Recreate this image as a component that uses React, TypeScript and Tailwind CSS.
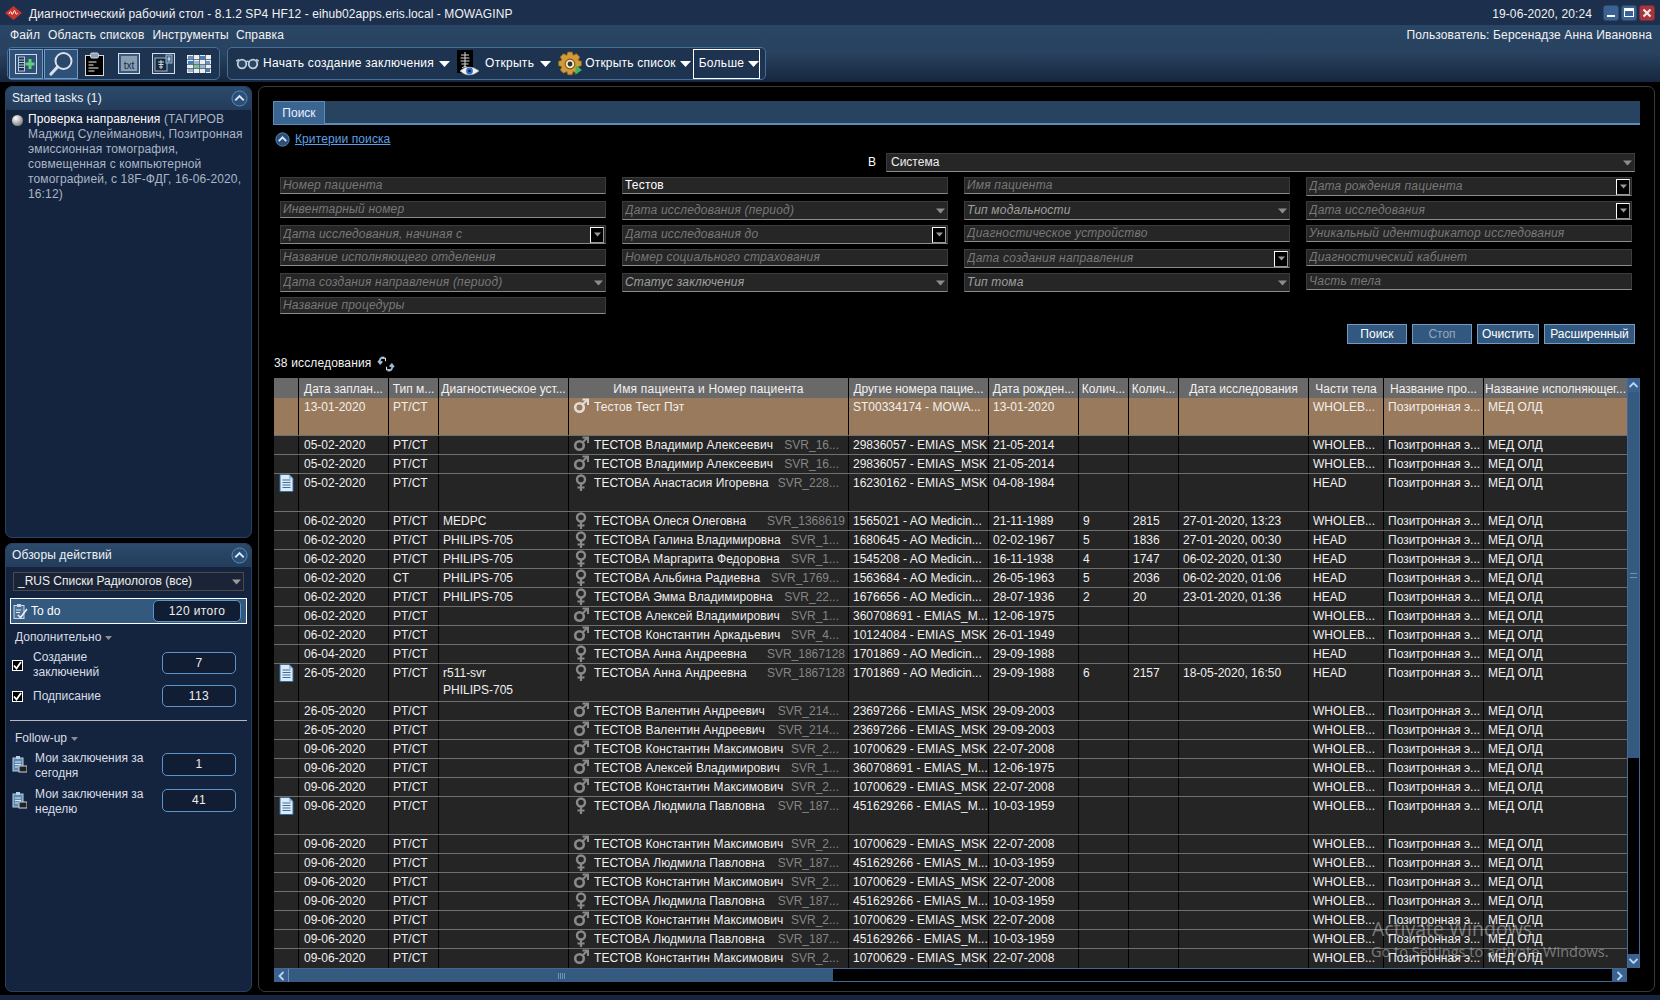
import React from "react";

type Row = {
  d: string; m: string; dev?: string; g: "m" | "f"; n: string; id?: string; o: string; b: string;
  c1?: string; c2?: string; s?: string; p: string; doc?: boolean; tall?: boolean; sel?: boolean;
};

const K: Omit<Row, "d" | "m"> = { g: "m", n: "ТЕСТОВ Константин Максимович", id: "SVR_2...", o: "10700629 - EMIAS_MSK", b: "22-07-2008", p: "WHOLEB..." };
const L: Omit<Row, "d" | "m"> = { g: "f", n: "ТЕСТОВА Людмила Павловна", id: "SVR_187...", o: "451629266 - EMIAS_M...", b: "10-03-1959", p: "WHOLEB..." };
const A: Omit<Row, "d" | "m"> = { g: "m", n: "ТЕСТОВ Алексей Владимирович", id: "SVR_1...", o: "360708691 - EMIAS_M...", b: "12-06-1975", p: "WHOLEB..." };
const V: Omit<Row, "d" | "m"> = { g: "m", n: "ТЕСТОВ Владимир Алексеевич", id: "SVR_16...", o: "29836057 - EMIAS_MSK", b: "21-05-2014", p: "WHOLEB..." };
const T: Omit<Row, "d" | "m"> = { g: "m", n: "ТЕСТОВ Валентин Андреевич", id: "SVR_214...", o: "23697266 - EMIAS_MSK", b: "29-09-2003", p: "WHOLEB..." };
const J = "09-06-2020";
const P = "PT/CT";

const rows: Row[] = [
  { d: "13-01-2020", m: P, g: "m", n: "Тестов Тест Пэт", o: "ST00334174 - MOWA...", b: "13-01-2020", p: "WHOLEB...", tall: true, sel: true },
  { d: "05-02-2020", m: P, ...V },
  { d: "05-02-2020", m: P, ...V },
  { d: "05-02-2020", m: P, g: "f", n: "ТЕСТОВА Анастасия Игоревна", id: "SVR_228...", o: "16230162 - EMIAS_MSK", b: "04-08-1984", p: "HEAD", doc: true, tall: true },
  { d: "06-02-2020", m: P, dev: "MEDPC", g: "f", n: "ТЕСТОВА Олеся Олеговна", id: "SVR_1368619", o: "1565021 - AO Medicin...", b: "21-11-1989", c1: "9", c2: "2815", s: "27-01-2020, 13:23", p: "WHOLEB..." },
  { d: "06-02-2020", m: P, dev: "PHILIPS-705", g: "f", n: "ТЕСТОВА Галина Владимировна", id: "SVR_1...", o: "1680645 - AO Medicin...", b: "02-02-1967", c1: "5", c2: "1836", s: "27-01-2020, 00:30", p: "HEAD" },
  { d: "06-02-2020", m: P, dev: "PHILIPS-705", g: "f", n: "ТЕСТОВА Маргарита Федоровна", id: "SVR_1...", o: "1545208 - AO Medicin...", b: "16-11-1938", c1: "4", c2: "1747", s: "06-02-2020, 01:30", p: "HEAD" },
  { d: "06-02-2020", m: "CT", dev: "PHILIPS-705", g: "f", n: "ТЕСТОВА Альбина Радиевна", id: "SVR_1769...", o: "1563684 - AO Medicin...", b: "26-05-1963", c1: "5", c2: "2036", s: "06-02-2020, 01:06", p: "HEAD" },
  { d: "06-02-2020", m: P, dev: "PHILIPS-705", g: "f", n: "ТЕСТОВА Эмма Владимировна", id: "SVR_22...", o: "1676656 - AO Medicin...", b: "28-07-1936", c1: "2", c2: "20", s: "23-01-2020, 01:36", p: "HEAD" },
  { d: "06-02-2020", m: P, ...A },
  { d: "06-02-2020", m: P, g: "m", n: "ТЕСТОВ Константин Аркадьевич", id: "SVR_4...", o: "10124084 - EMIAS_MSK", b: "26-01-1949", p: "WHOLEB..." },
  { d: "06-04-2020", m: P, g: "f", n: "ТЕСТОВА Анна Андреевна", id: "SVR_1867128", o: "1701869 - AO Medicin...", b: "29-09-1988", p: "HEAD" },
  { d: "26-05-2020", m: P, dev: "r511-svr\nPHILIPS-705", g: "f", n: "ТЕСТОВА Анна Андреевна", id: "SVR_1867128", o: "1701869 - AO Medicin...", b: "29-09-1988", c1: "6", c2: "2157", s: "18-05-2020, 16:50", p: "HEAD", doc: true, tall: true },
  { d: "26-05-2020", m: P, ...T },
  { d: "26-05-2020", m: P, ...T },
  { d: J, m: P, ...K },
  { d: J, m: P, ...A },
  { d: J, m: P, ...K },
  { d: J, m: P, ...L, doc: true, tall: true },
  { d: J, m: P, ...K },
  { d: J, m: P, ...L },
  { d: J, m: P, ...K },
  { d: J, m: P, ...L },
  { d: J, m: P, ...K },
  { d: J, m: P, ...L },
  { d: J, m: P, ...K },
];

const COLS = "grid grid-cols-[25px_90px_50px_130px_280px_140px_90px_50px_50px_130px_75px_100px_143px]";

const Caret = ({ c = "#fff", w = 11, h = 6 }: { c?: string; w?: number; h?: number }) => (
  <svg width={w} height={h} viewBox="0 0 11 6" className="shrink-0"><path d="M0 0h11L5.500 6z" fill={c} /></svg>
);

const Male = ({ c = "#8a8a8a" }: { c?: string }) => (
  <svg width="16" height="16" viewBox="0 0 16 16" className="shrink-0" fill="none" stroke={c}>
    <circle cx="6.500" cy="9.500" r="4.300" strokeWidth="2.600" />
    <path d="M10 6l4-4" strokeWidth="2.200" />
    <path d="M9.500 1.500H15V7" strokeWidth="2" />
  </svg>
);
const Female = () => (
  <svg width="16" height="17" viewBox="0 0 16 17" className="shrink-0" fill="none" stroke="#8a8a8a">
    <circle cx="8" cy="5.500" r="4" strokeWidth="2.400" />
    <path d="M8 10v7M4.500 13.500h7" strokeWidth="2.200" />
  </svg>
);
const DocIcon = () => (
  <svg width="15" height="18" viewBox="0 0 15 18">
    <path d="M1 .5h9l4 4v13H1z" fill="#dfeaf5" stroke="#2f6fa8" />
    <path d="M10 .5v4h4z" fill="#8fb8dc" />
    <path d="M3.500 6h8M3.500 8.500h8M3.500 11h8M3.500 13.500h8" stroke="#3a6f9f" strokeWidth="1.100" />
  </svg>
);
const Chevron = ({ s = 18 }: { s?: number }) => (
  <svg width={s} height={s} viewBox="0 0 18 18" className="shrink-0">
    <circle cx="9" cy="9" r="8" fill="#2a4f78" stroke="#5d8fbd" />
    <path d="M4.500 11L9 6.500 13.500 11" fill="none" stroke="#dfe8f2" strokeWidth="2.200" />
  </svg>
);

function Field({ t, k = "i", bright }: { t: string; k?: "i" | "s" | "d"; bright?: boolean }) {
  const h = k === "i" ? "h-[17px]" : "h-[19px]";
  return (
    <div className={`${h} flex items-center bg-[#262626] border border-[#3c3c3c] border-b-[#8a8a8a] pl-[2px] overflow-hidden`}>
      <span className={`flex-1 truncate tracking-[0.2px] ${t === "Тестов" ? "text-white" : "italic " + (bright ? "text-[#a0a0a0]" : "text-[#787878]")}`}>{t}</span>
      {k === "s" && <span className="mr-[2px]"><Caret c="#8c8c8c" w={9} h={6} /></span>}
      {k === "d" && (
        <span className="w-[14px] h-[16px] bg-black border border-white border-b-[#999] border-r-[#999] flex items-center justify-center mr-px">
          <Caret c="#9a9a9a" w={7} h={5} />
        </span>
      )}
    </div>
  );
}

function ToolBtn({ children, active }: { children: React.ReactNode; active?: boolean }) {
  return (
    <div className={`w-[34px] h-[30px] flex items-center justify-center ${active ? "bg-[#2f5078] border border-[#6d9cc6]" : ""}`}>{children}</div>
  );
}

const Btn = ({ t, w, off }: { t: string; w: string; off?: boolean }) => (
  <div className={`${w} h-[20px] bg-[#32587f] border border-[#6d9cc6] flex items-center justify-center ${off ? "text-[#94a9bf]" : "text-white"}`}>{t}</div>
);

const Val = ({ t, w = "w-[74px]", h = "h-[22px]" }: { t: string; w?: string; h?: string }) => (
  <div className={`${w} ${h} rounded-[5px] border border-[#5a94cc] bg-[#111d33] flex items-center justify-center text-[#eee] tracking-[0.4px]`}>{t}</div>
);

const Check = () => (
  <span className="w-[11px] h-[11px] bg-black border border-white flex items-center justify-center shrink-0">
    <svg width="9" height="9" viewBox="0 0 9 9"><path d="M1 4.500l2.500 3L8 1" fill="none" stroke="#fff" strokeWidth="1.800" /></svg>
  </span>
);

const SmallClip = () => (
  <svg width="15" height="19" viewBox="0 0 15 19" className="shrink-0">
    <rect x="1" y="3" width="10" height="13" fill="#5f89b2" stroke="#b8cfe4" />
    <rect x="4" y="1" width="4" height="3" fill="#b8cfe4" />
    <path d="M3 7h6M3 9.500h6M3 12h3" stroke="#d8e6f2" />
    <rect x="7" y="11" width="8" height="6" fill="#222" stroke="#c8d6e4" />
  </svg>
);

export default function App() {
  return (
    <div className="w-[1660px] h-[1000px] flex flex-col overflow-hidden bg-black text-[12px] leading-[15px] text-white font-['Liberation_Sans',Arial,sans-serif]">
      {/* Title bar */}
      <div className="h-[25px] shrink-0 bg-[#1c2f4d] flex items-center pl-[5px] pr-[5px]">
        <svg width="17" height="14" viewBox="0 0 17 14" className="shrink-0">
          <path d="M8.500 0L17 7l-8.500 7L0 7z" fill="#c8352f" />
          <path d="M4 8c1-3 2-3 2.500-1s1 2 2-1 1.500-1 2 1 1 1 2.500 0" fill="none" stroke="#fff" strokeWidth="1" />
        </svg>
        <span className="ml-[7px] pt-[3px] tracking-[0.08px] text-[#f2f2f2]">Диагностический рабочий стол - 8.1.2 SP4 HF12 - eihub02apps.eris.local - MOWAGINP</span>
        <span className="ml-auto pt-[3px] tracking-[0.1px] text-[#f2f2f2] mr-[11px]">19-06-2020, 20:24</span>
        <div className="flex gap-[2px]">
          <div className="w-[16px] h-[16px] rounded-[3px] bg-[#3a6394] border border-[#2b4a70] flex items-end justify-center pb-[3px]"><span className="w-[8px] h-[2px] bg-white" /></div>
          <div className="w-[16px] h-[16px] rounded-[3px] bg-[#3a6394] border border-[#2b4a70] flex items-center justify-center"><span className="w-[10px] h-[9px] border border-white border-t-[3px]" /></div>
          <div className="w-[16px] h-[16px] rounded-[3px] bg-[#a6353d] border border-[#7b2b35] flex items-center justify-center">
            <svg width="10" height="10" viewBox="0 0 10 10"><path d="M1.500 1.500l7 7M8.500 1.500l-7 7" stroke="#f3e8e8" strokeWidth="2.200" /></svg>
          </div>
        </div>
      </div>

      {/* Menu + toolbar */}
      <div className="h-[57px] shrink-0 bg-gradient-to-b from-[#2a4666] via-[#28425f] to-[#17263f]">
        <div className="h-[20px] flex items-center pl-[10px] pr-[8px] text-[#f2f2f2] tracking-[0.15px]">
          <span>Файл</span>
          <span className="ml-[8px]">Область списков</span>
          <span className="ml-[8px]">Инструменты</span>
          <span className="ml-[7px]">Справка</span>
          <span className="ml-auto">Пользователь: Берсенадзе Анна Ивановна</span>
        </div>
        <div className="flex mt-[2px] pl-[7px] gap-[7px]">
          {/* group 1 */}
          <div className="w-[213px] h-[33px] rounded-[5px] border border-[#46709c] bg-[#1d3350] flex items-center pl-[1px]">
            <ToolBtn active>
              <svg width="22" height="20" viewBox="0 0 22 20">
                <rect x=".5" y=".5" width="21" height="19" fill="#2f5078" stroke="#cfdce8" />
                <rect x="3.500" y="3" width="6" height="14" fill="#1d3350" stroke="#b8c8d8" />
                <path d="M3.500 6h6M3.500 8.500h6M3.500 11h6M3.500 13.500h6" stroke="#b8c8d8" />
                <path d="M15 5v10M10.500 10h9" stroke="#5fcf78" strokeWidth="3" />
              </svg>
            </ToolBtn>
            <span className="w-[1px]" />
            <ToolBtn active>
              <svg width="26" height="26" viewBox="0 0 26 26" fill="none">
                <circle cx="15.500" cy="10" r="8" stroke="#d8e2ec" strokeWidth="2" fill="#2a4767" />
                <path d="M9.500 16L3 23" stroke="#d8e2ec" strokeWidth="3.200" strokeLinecap="round" />
              </svg>
            </ToolBtn>
            <span className="ml-[7px]">
              <svg width="19" height="24" viewBox="0 0 19 24" className="block">
                <rect x=".5" y="3.500" width="18" height="20" fill="#000" stroke="#d8d8d8" />
                <rect x="5.500" y="1" width="8" height="5" rx="1.500" fill="#8aa4bf" stroke="#d8d8d8" />
                <path d="M3.500 10h8M3.500 13h5M3.500 16h10M3.500 19h6" stroke="#eee" strokeWidth="1.200" />
              </svg>
            </span>
            <span className="ml-[14px]">
              <svg width="22" height="21" viewBox="0 0 22 21" className="block">
                <rect x=".5" y=".5" width="21" height="20" fill="#365a82" stroke="#d3dde7" />
                <rect x="3" y="3" width="16" height="15" fill="#8a9db3" />
                <text x="11" y="15.500" textAnchor="middle" fontSize="10" fill="#18283f" fontFamily="Liberation Sans">txt</text>
              </svg>
            </span>
            <span className="ml-[12px]">
              <svg width="23" height="21" viewBox="0 0 23 21" className="block">
                <rect x=".5" y=".5" width="22" height="20" fill="#25405f" stroke="#d3dde7" />
                <rect x="3" y="5" width="12" height="13" fill="#18283f" stroke="#9fb2c6" />
                <rect x="14" y="2" width="6" height="8" fill="#4a6a8e" stroke="#9fb2c6" />
                <path d="M9 7v9M6 9h6M6.500 11.500h5M7 14h4" stroke="#cfdbe6" />
                <path d="M17 3.500v5M15.500 6h3" stroke="#dfe7ef" />
              </svg>
            </span>
            <span className="ml-[12px]">
              <svg width="24" height="18" viewBox="0 0 24 18" className="block">
                <rect width="24" height="18" fill="#e9eef3" />
                <rect x="1" y="1" width="5" height="3" fill="#6d93bc" /><rect x="13" y="1" width="5" height="3" fill="#3f7fc0" />
                <rect x="1" y="6" width="5" height="3" fill="#3f7fc0" /><rect x="7" y="6" width="5" height="3" fill="#9ab6d2" /><rect x="19" y="6" width="4" height="3" fill="#6d93bc" />
                <rect x="7" y="10" width="5" height="3" fill="#6fc58a" /><rect x="13" y="10" width="5" height="3" fill="#9ab6d2" />
                <rect x="1" y="14" width="5" height="3" fill="#9ab6d2" /><rect x="19" y="14" width="4" height="3" fill="#3f7fc0" />
                <path d="M6.500 0v18M12.500 0v18M18.500 0v18M0 4.500h24M0 9.500h24M0 13.500h24" stroke="#46586c" strokeWidth=".8" />
              </svg>
            </span>
          </div>
          {/* group 2 */}
          <div className="w-[539px] h-[33px] rounded-[5px] border border-[#46709c] bg-[#1d3350] flex items-center pl-[8px] tracking-[0.28px]">
            <svg width="23" height="12" viewBox="0 0 23 12" className="shrink-0">
              <path d="M0 3l3-1.500M23 3l-3-1.500M10 4q1.500-1.500 3 0" fill="none" stroke="#b8c8d6" strokeWidth="1.400" />
              <circle cx="6" cy="6" r="4.300" fill="#2a4767" stroke="#bfcedb" strokeWidth="1.800" />
              <circle cx="17" cy="6" r="4.300" fill="#2a4767" stroke="#bfcedb" strokeWidth="1.800" />
            </svg>
            <span className="ml-[4px]">Начать создание заключения</span>
            <span className="ml-[5px]"><Caret /></span>
            <svg width="24" height="28" viewBox="0 0 24 28" className="ml-[7px] shrink-0">
              <rect width="16" height="23" fill="#000" />
              <path d="M8 2v18M4 5h8M3.500 8h9M3.500 11h9M4.500 14h7M5 18l3-2 3 2" stroke="#d8d8d8" fill="none" />
              <path d="M3 21q9-8 19 0q-10 8-19 0z" fill="#f2f2f2" stroke="#aaa" strokeWidth=".6" />
              <circle cx="12.500" cy="21" r="3.400" fill="#2f6ec0" />
              <circle cx="12.500" cy="21" r="1.300" fill="#0c1f3a" />
            </svg>
            <span className="ml-[4px]">Открыть</span>
            <span className="ml-[6px]"><Caret /></span>
            <svg width="26" height="26" viewBox="0 0 24 24" className="ml-[6px] shrink-0">
              <path d="M10 1h4l1 3 3-1.500 3 3L19.500 8.500l3 1v4l-3 1 1.500 3-3 3-3-1.500-1 3h-4l-1-3-3 1.500-3-3L4.500 14.500l-3-1v-4l3-1L3 5.500l3-3L9 4z" fill="#d49a3a" stroke="#8d6420" strokeWidth=".7" />
              <circle cx="12" cy="12" r="4.500" fill="#f2e3b8" stroke="#7a5518" />
              <circle cx="12" cy="12" r="2.200" fill="#30343a" />
              <path d="M17 13l6 4.500-6 4.500z" fill="#45b35c" />
            </svg>
            <span className="ml-[2px] tracking-[0.2px]">Открыть список</span>
            <span className="ml-[4px]"><Caret /></span>
            <div className="ml-[2px] w-[67px] h-[30px] border border-white flex items-center pl-[5px]">
              <span>Больше</span>
              <span className="ml-[4px]"><Caret /></span>
            </div>
          </div>
        </div>
      </div>

      {/* Body */}
      <div className="flex-1 min-h-0 flex gap-[6px] pl-[5px] pr-[5px] pt-[4px] pb-[3px]">
        <aside className="w-[247px] shrink-0 flex flex-col gap-[5px]">
          <section className="h-[452px] rounded-[7px] border border-[#2a4262] bg-[#15243e] overflow-hidden">
            <div className="h-[23px] pl-[6px] pr-[3px] flex items-center justify-between bg-gradient-to-b from-[#2c4a6c] to-[#233c5a]">
              <span className="text-[#eef2f6] tracking-[0.1px]">Started tasks (1)</span>
              <Chevron s={17} />
            </div>
            <div className="flex pl-[6px] pr-[4px] pt-[2px]">
              <span className="w-[11px] h-[11px] mt-[3px] rounded-full bg-[radial-gradient(circle_at_35%_30%,#fff,#8a8a8a_70%)] shrink-0" />
              <p className="ml-[5px] text-[#a9b6c6] tracking-[0.13px]"><span className="text-white">Проверка направления</span> (ТАГИРОВ Маджид Сулейманович, Позитронная эмиссионная томография, совмещенная с компьютерной томографией, с 18F-ФДГ, 16-06-2020, 16:12)</p>
            </div>
          </section>
          <section className="flex-1 rounded-[7px] border border-[#2a4262] bg-[#15243e] overflow-hidden">
            <div className="h-[23px] pl-[6px] pr-[3px] flex items-center justify-between bg-gradient-to-b from-[#2c4a6c] to-[#233c5a]">
              <span className="text-[#eef2f6] tracking-[0.1px]">Обзоры действий</span>
              <Chevron s={17} />
            </div>
            <div className="mx-[7px] mt-[5px] h-[19px] border border-[#4a4a4a] bg-[#1a2436] flex items-center pl-[4px] pr-[2px] text-[#eee]">
              <span className="flex-1">_RUS Списки Радиологов (все)</span>
              <Caret c="#9a9a9a" w={9} h={6} />
            </div>
            <div className="mx-[4px] mt-[7px] h-[26px] border border-white bg-[#34597f] flex items-center pl-[2px]">
              <svg width="15" height="17" viewBox="0 0 15 17" className="shrink-0">
                <rect x="1" y="2.500" width="10" height="13" fill="#4d7298" stroke="#c8d8e6" />
                <rect x="4" y="1" width="4" height="3" fill="#c8d8e6" />
                <path d="M3 7h5M3 9.500h4" stroke="#dbe7f1" />
                <path d="M5 12l2.500 2.500L14 6" fill="none" stroke="#eef" strokeWidth="1.600" />
              </svg>
              <span className="ml-[3px]">To do</span>
              <span className="ml-auto mr-[5px]"><Val t="120 итого" w="w-[88px]" /></span>
            </div>
            <div className="mt-[6px] ml-[9px] h-[15px] flex items-center gap-[4px] text-[#d8dee6]">Дополнительно <Caret c="#8a8f96" w={7} h={4} /></div>
            <div className="mt-[5px] flex pl-[6px] h-[30px] items-start">
              <span className="mt-[10px]"><Check /></span>
              <span className="ml-[10px] w-[100px] text-[#d8dee6]">Создание заключений</span>
              <span className="ml-[29px] mt-[2px]"><Val t="7" /></span>
            </div>
            <div className="mt-[5px] flex pl-[6px] h-[22px] items-center">
              <Check />
              <span className="ml-[10px] w-[100px] text-[#d8dee6]">Подписание</span>
              <span className="ml-[29px]"><Val t="113" /></span>
            </div>
            <div className="mx-[4px] mt-[13px] h-[1px] bg-[#b8b8b8]" />
            <div className="mt-[10px] ml-[9px] h-[15px] flex items-center gap-[4px] text-[#d8dee6]">Follow-up <Caret c="#8a8f96" w={7} h={4} /></div>
            <div className="mt-[5px] flex pl-[6px] h-[30px] items-start">
              <span className="mt-[4px]"><SmallClip /></span>
              <span className="ml-[8px] w-[127px] text-[#d8dee6]">Мои заключения за сегодня</span>
              <span className="mt-[2px]"><Val t="1" h="h-[23px]" /></span>
            </div>
            <div className="mt-[6px] flex pl-[6px] h-[30px] items-start">
              <span className="mt-[4px]"><SmallClip /></span>
              <span className="ml-[8px] w-[127px] text-[#d8dee6]">Мои заключения за неделю</span>
              <span className="mt-[2px]"><Val t="41" h="h-[23px]" /></span>
            </div>
          </section>
        </aside>

        {/* Main */}
        <main className="relative flex-1 min-w-0 rounded-[7px] border border-[#3a3a3a] bg-black pl-[14px] pr-[14px] pt-[14px]">
          <div className="h-[24px] bg-[#27435f] border-b-2 border-[#5a8dbc]">
            <div className="w-[52px] h-[23px] bg-[#3a6591] border border-[#5a8dbc] border-b-0 flex items-center justify-center text-[#eef]">Поиск</div>
          </div>
          <div className="mt-[7px] h-[15px] flex items-center pl-[2px]">
            <Chevron s={15} />
            <span className="ml-[5px] text-[#5aa2e6] underline tracking-[0.1px]">Критерии поиска</span>
          </div>
          <div className="mt-[6px] h-[19px] flex items-center justify-end mr-[5px]">
            <span className="mr-[10px]">В</span>
            <div className="w-[749px] h-[19px] bg-[#262626] border border-[#3c3c3c] border-b-[#8a8a8a] flex items-center pl-[4px] pr-[2px]">
              <span className="flex-1 text-[#eee]">Система</span>
              <Caret c="#8c8c8c" w={9} h={6} />
            </div>
          </div>
          <div className="mt-[5px] ml-[7px] mr-[8px] grid grid-cols-4 gap-x-[16px] auto-rows-[24px] items-start">
            <Field t="Номер пациента" /><Field t="Тестов" /><Field t="Имя пациента" /><Field t="Дата рождения пациента" k="d" />
            <Field t="Инвентарный номер" /><Field t="Дата исследования (период)" k="s" /><Field t="Тип модальности" k="s" bright /><Field t="Дата исследования" k="d" />
            <Field t="Дата исследования, начиная с" k="d" /><Field t="Дата исследования до" k="d" /><Field t="Диагностическое устройство" /><Field t="Уникальный идентификатор исследования" />
            <Field t="Название исполняющего отделения" /><Field t="Номер социального страхования" /><Field t="Дата создания направления" k="d" /><Field t="Диагностический кабинет" />
            <Field t="Дата создания направления (период)" k="s" /><Field t="Статус заключения" k="s" bright /><Field t="Тип тома" k="s" bright /><Field t="Часть тела" />
            <Field t="Название процедуры" />
          </div>
          <div className="mt-[3px] mr-[5px] flex justify-end gap-[5px]">
            <Btn t="Поиск" w="w-[60px]" /><Btn t="Стоп" w="w-[60px]" off /><Btn t="Очистить" w="w-[62px]" /><Btn t="Расширенный" w="w-[91px]" />
          </div>
          <div className="h-[34px] pl-[1px] flex items-start pt-[12px] text-[#f2f2f2] tracking-[0.15px]">
            <span>38 исследования</span>
            <svg width="18" height="18" viewBox="0 0 17 17" className="ml-[6px] -mt-[1px]" fill="none" stroke="#9fbcd8" strokeWidth="1.800">
              <path d="M7 2.500C3 1.500 2 5 3 7.500M1 5.500l2 2.500 2-2" />
              <path d="M10 14.500c4 1 5-2.500 4-5M16 11.500l-2-2.500-2 2" />
              <path d="M5 3h3v3M12 14h-3v-3" stroke="#dbe6f0" strokeWidth="1" />
            </svg>
          </div>

          {/* Table */}
          <div className="flex pl-px">
            <div className="w-[1353px] shrink-0 border-b border-[#3f6a96]">
              <div className={`${COLS} h-[20px] bg-[#696969] text-center text-[#f2f2f2] leading-[22px]`}>
                {["", "Дата заплан...", "Тип м...", "Диагностическое уст...", "Имя пациента и Номер пациента", "Другие номера пацие...", "Дата рожден...", "Колич...", "Колич...", "Дата исследования", "Части тела", "Название про...", "Название исполняющег..."].map((h, i) => (
                  <div key={i} className={`border-r border-black whitespace-nowrap overflow-hidden last:border-r-0 ${i === 4 ? "tracking-[0.2px]" : ""}`}>{h}</div>
                ))}
              </div>
              {rows.map((r, i) => (
                <TableRow key={i} r={r} last={i === rows.length - 1} />
              ))}
            </div>
            <div className="w-[13px] shrink-0 flex flex-col h-[590px] border-x border-[#3f6a96]">
              <div className="h-[14px] bg-[#3a6190] flex items-center justify-center">
                <svg width="9" height="6" viewBox="0 0 9 6"><path d="M.5 5L4.500 1l4 4" fill="none" stroke="#bcd6f0" strokeWidth="1.800" /></svg>
              </div>
              <div className="h-[366px] bg-[#35597f] flex items-center justify-center">
                <div className="w-[7px] h-[5px] border-y border-[#6d93bc]" />
              </div>
              <div className="flex-1 bg-black" />
              <div className="h-[14px] bg-[#3a6190] flex items-center justify-center">
                <svg width="9" height="6" viewBox="0 0 9 6"><path d="M.5 1l4 4 4-4" fill="none" stroke="#bcd6f0" strokeWidth="1.800" /></svg>
              </div>
            </div>
          </div>
          <div className="w-[1353px] ml-px h-[13px] flex">
            <div className="w-[15px] bg-[#3a6190] flex items-center justify-center border-r border-[#6d93bc]">
              <svg width="7" height="10" viewBox="0 0 7 10"><path d="M5.500 1l-4 4 4 4" fill="none" stroke="#bcd6f0" strokeWidth="1.800" /></svg>
            </div>
            <div className="w-[544px] bg-[#35597f] flex items-center justify-center gap-[1px]">
              <span className="w-px h-[6px] bg-[#6d93bc]" /><span className="w-px h-[6px] bg-[#6d93bc]" /><span className="w-px h-[6px] bg-[#6d93bc]" /><span className="w-px h-[6px] bg-[#6d93bc]" />
            </div>
            <div className="flex-1 bg-black border-b border-[#3f6a96]" />
            <div className="w-[15px] bg-[#3a6190] flex items-center justify-center">
              <svg width="7" height="10" viewBox="0 0 7 10"><path d="M1.500 1l4 4-4 4" fill="none" stroke="#bcd6f0" strokeWidth="1.800" /></svg>
            </div>
          </div>

          {/* OS watermark */}
          <div className="absolute left-[1113px] top-[830px] text-[19.5px] leading-[24px] text-white/40 font-['Open_Sans',sans-serif] whitespace-nowrap pointer-events-none">Activate Windows</div>
          <div className="absolute left-[1112px] top-[856px] text-[14.500px] leading-[18px] text-white/40 font-['Open_Sans',sans-serif] whitespace-nowrap pointer-events-none">Go to Settings to activate Windows.</div>
        </main>
      </div>
      <div className="h-[5px] shrink-0 bg-[#17263f]" />
    </div>
  );
}

function TableRow({ r, last }: { r: Row; last: boolean }) {
  const cell = "border-r border-black pl-[4px] pt-px whitespace-nowrap overflow-hidden leading-[17px] text-[#f0f0f0]";
  return (
    <div className={`${COLS} ${r.tall ? "h-[38px]" : "h-[19px]"} ${r.sel ? "bg-[#997a5d]" : "bg-[#252525]"} ${last ? "" : "border-b border-[#6f6f6f]"}`}>
      <div className="border-r border-black pl-[5px]">{r.doc && <DocIcon />}</div>
      <div className="border-r border-black pl-[5px] pt-px whitespace-nowrap overflow-hidden leading-[17px] text-[#f0f0f0]">{r.d}</div>
      <div className={cell}>{r.m}</div>
      <div className={`${cell} whitespace-pre pt-[2px]`}>{r.dev}</div>
      <div className={`${cell} flex items-start pr-[2px]`}>
        <span className="w-[21px] shrink-0 -mt-px">{r.g === "m" ? <Male c={r.sel ? "#e2ddd6" : "#8a8a8a"} /> : <Female />}</span>
        <span className="shrink-0 tracking-[0.07px]">{r.n}</span>
        <span className={`flex-1 text-right text-[#858585] pl-[6px] ${r.id && r.id.endsWith("...") ? "pr-[7px]" : "pr-px"}`}>{r.id}</span>
      </div>
      <div className={cell}>{r.o}</div>
      <div className={cell}>{r.b}</div>
      <div className={cell}>{r.c1}</div>
      <div className={cell}>{r.c2}</div>
      <div className={cell}>{r.s}</div>
      <div className={cell}>{r.p}</div>
      <div className={cell}>Позитронная э...</div>
      <div className={`${cell} border-r-0`}>МЕД ОЛД</div>
    </div>
  );
}
